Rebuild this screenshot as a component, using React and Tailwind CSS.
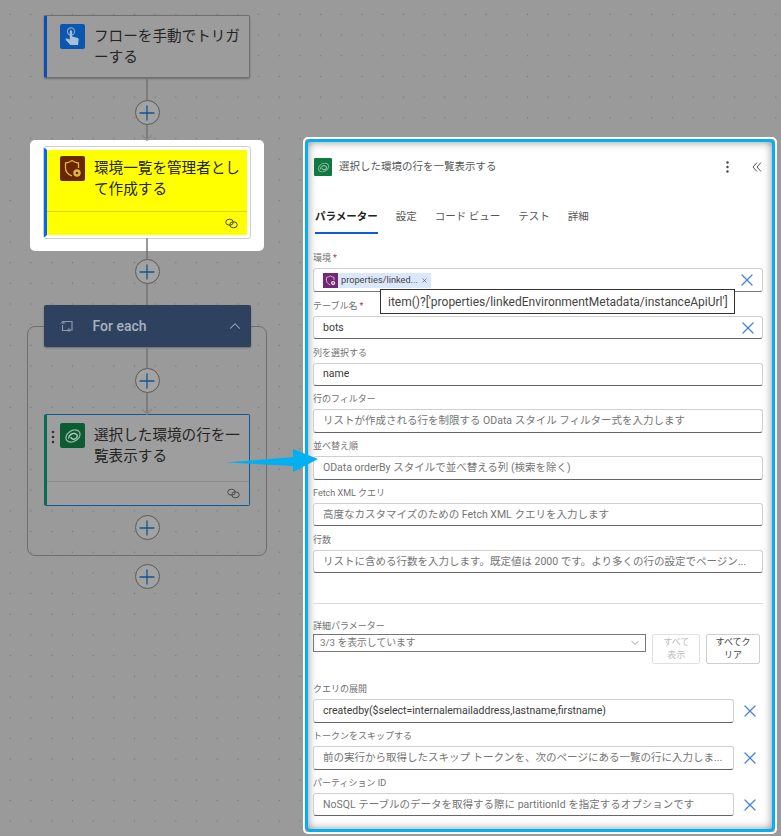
import React from "react";
import { Plus, X, ChevronDown, ChevronUp } from "lucide-react";

const LinkIcon = () => (
  <svg width="13" height="11" viewBox="0 0 13 11" fill="none" stroke="#4a4a4a" strokeWidth="1">
    <ellipse cx="4.5" cy="4.2" rx="3.8" ry="3" />
    <ellipse cx="8.5" cy="6.8" rx="3.8" ry="3" />
  </svg>
);

const HandIcon = () => (
  <svg width="17" height="19" viewBox="0 0 17 19" fill="none">
    <circle cx="7" cy="4.5" r="3.6" stroke="#7fa3cf" strokeWidth="1.2" />
    <path d="M5.8 4.5a1.2 1.2 0 0 1 2.4 0v5l5 1.2c1 .3 1.5 1 1.4 2l-.6 5.3H6.4L2 13.2c-.8-1-.2-2 .9-1.8l2.9 1.2z" fill="#a9bfd8" />
  </svg>
);

const ShieldIcon = ({ color = "#e0b93a", size = 19, dot = "#e0b93a" }) => (
  <svg width={size} height={size} viewBox="0 0 19 19" fill="none">
    <path d="M9 1.5c2 1.5 4 2.3 6.5 2.5v5" stroke={color} strokeWidth="1.3" />
    <path d="M9 1.5C7 3 5 3.8 2.5 4v5c0 3.8 2.4 6.3 6.5 8" stroke={color} strokeWidth="1.3" />
    <circle cx="14" cy="14" r="3.7" fill={dot} />
    <circle cx="14" cy="14" r="1.3" fill="#6b2500" />
  </svg>
);

const DataverseIcon = ({ size = 18 }) => (
  <svg width={size} height={size} viewBox="0 0 18 18" fill="none">
    <ellipse cx="9" cy="9" rx="7.6" ry="5.4" transform="rotate(-30 9 9)" stroke="#8fb39c" strokeWidth="1.3" />
    <path d="M4.5 11.5C5 7.5 9 5.5 12 7c2 1 1.5 4-1 5-2 .7-4-.3-4-2" stroke="#c4d6ca" strokeWidth="1.3" />
  </svg>
);

const LoopIcon = () => (
  <svg width="14" height="12" viewBox="0 0 14 12" fill="none" stroke="#8b97a8" strokeWidth="1.2">
    <path d="M3 4V1.5h9V10H8" />
    <path d="M11 10.5H2.5V5" />
    <path d="M1 3.5L3 1l2 2.5" strokeWidth="1" />
    <path d="M9.5 8l-2 2 2 2" strokeWidth="1" />
  </svg>
);

const Connector = ({ top = 0, bottom = 0, arrow = false }) => (
  <div className="relative flex flex-col items-center w-[26px]">
    <div className="w-[2px] bg-[#7c7c7c]" style={{ height: top }} />
    <div className="flex h-[25px] w-[25px] items-center justify-center rounded-full border-[1.5px] border-[#5a5a5a] bg-[#a2a2a2]">
      <Plus size={24} strokeWidth={1.3} className="shrink-0 text-[#15568f]" />
    </div>
    <div className="w-[2px] bg-[#7c7c7c]" style={{ height: bottom }} />
    {arrow && (
      <svg className="absolute left-[7px] -bottom-[1px] z-10" width="12" height="7" viewBox="0 0 12 7" fill="none" stroke="#8a8a8a" strokeWidth="1.6">
        <path d="M1 1l5 5 5-5" />
      </svg>
    )}
  </div>
);

const Card = ({ tint, title, icon, iconBg, footer, grip, className, padTop = "pt-[8px]" }) => (
  <div className={`flex flex-col w-[206px] shrink-0 rounded-[2px] ${className}`}>
    <div className={`flex items-start gap-[9px] pl-[13px] pr-[6px] ${padTop}`}>
      <div className="relative">
        {grip && (
          <svg className="absolute -left-[9px] top-[7px]" width="4" height="14" viewBox="0 0 4 14" fill="#333">
            <circle cx="2" cy="2" r="1.3" />
            <circle cx="2" cy="7" r="1.3" />
            <circle cx="2" cy="12" r="1.3" />
          </svg>
        )}
        <div className={`flex h-[25px] w-[25px] shrink-0 items-center justify-center rounded-[2px] ${iconBg}`}>{icon}</div>
      </div>
      <p className="mt-[1.5px] text-[14.6px] leading-[21.5px] text-[#242424]">{title}</p>
    </div>
    {footer && (
      <div className={`mt-auto flex h-[24px] items-center justify-end border-t pr-[9px] ${tint}`}>
        <LinkIcon />
      </div>
    )}
  </div>
);

const Label = ({ children, required }) => (
  <div className="flex h-[23.4px] items-end pb-[4px] text-[9px] leading-[11px] text-[#707070]">
    {children}
    {required && <span className="ml-[2px] text-[#c4314b]">*</span>}
  </div>
);

const Box = ({ children, muted, wide }) => (
  <div className={`flex h-[23.4px] min-w-0 items-center rounded-[3px] border border-[#cfcfcf] border-b-[#666] bg-white px-[9px] text-[10.5px] ${wide ? "w-[450px]" : "w-[422px]"} ${muted ? "text-[#757575]" : "text-[#3a3a3a]"}`}>
    <span className="truncate">{children}</span>
  </div>
);

const ClearIcon = () => <X size={20} strokeWidth={1.5} className="shrink-0 text-[#4a7fdc]" />;

const Field = ({ label, required, value, placeholder, clearInside }) => (
  <div className="flex flex-col">
    <Label required={required}>{label}</Label>
    <div className="relative w-[450px]">
      <Box wide muted={!value}>{value || placeholder}</Box>
      {clearInside && <div className="absolute right-[5px] top-[2px]"><ClearIcon /></div>}
    </div>
  </div>
);

const AdvField = ({ label, value, placeholder }) => (
  <div className="flex flex-col">
    <Label>{label}</Label>
    <div className="flex items-center gap-[6px]">
      <Box muted={!value}>{value || placeholder}</Box>
      <ClearIcon />
    </div>
  </div>
);

const tabs = ["設定", "コード ビュー", "テスト", "詳細"];

export default function App() {
  return (
    <div className="relative flex h-[836px] w-[781px] overflow-hidden bg-[#9a9a9a] bg-[radial-gradient(circle,#727272_0.7px,transparent_1px)] bg-[size:20.7px_20.7px] bg-[position:0px_4px] font-['Roboto','Noto_Sans_CJK_JP',sans-serif]">
      {/* canvas */}
      <div className="flex w-[303px] shrink-0 flex-col items-center pt-[15px] pr-[9px]">
        <Card
          title="フローを手動でトリガーする"
          iconBg="bg-[#0b57b0]"
          icon={<HandIcon />}
          className="h-[63px] border border-[#707070] border-l-[3px] border-l-[#0b4fb0] bg-[#9c9c9c] shadow-[0_1px_2px_rgba(0,0,0,0.3)]"
        />
        <Connector top={22} bottom={15} arrow />

        <div className="flex h-[111px] w-[234px] flex-col items-center rounded-[5px] bg-white pt-[7px]">
          <Card
            title="環境一覧を管理者として作成する"
            iconBg="bg-[#6b2500]"
            icon={<ShieldIcon />}
            footer
            padTop="pt-[6px]"
            tint="border-[#d8d800]"
            className="h-[91px] border-[3px] border-l-[3px] border-[#ffffff] border-l-[#0066ff] bg-[#ffff00] outline outline-[#cfcfcf]"
          />
          <div className="h-[13px] w-[2px] bg-[#9a9a9a]" />
        </div>
        <Connector top={8} bottom={21} />

        <div className="relative mt-[21px] flex h-[230px] w-[240px] flex-col items-center rounded-[8px] border border-[#6e6e6e]">
          <div className="-mt-[22px] flex h-[42px] w-[207px] items-center rounded-[2px] bg-[#2e4260] pl-[16px] pr-[7px] text-[#a9b2bf] shadow-[0_1px_2px_rgba(0,0,0,0.3)]">
            <LoopIcon />
            <span className="ml-[19px] flex-1 text-[14px] font-medium">For each</span>
            <ChevronUp size={18} strokeWidth={1.4} />
          </div>
          <Connector top={21} bottom={21} arrow />
          <Card
            grip
            title="選択した環境の行を一覧表示する"
            iconBg="bg-[#0b5c33]"
            icon={<DataverseIcon />}
            footer
            tint="border-[#8a8a8a]"
            className="h-[92px] border border-[#0f5a9c] border-l-[3px] border-l-[#0a6a52] bg-[#9e9e9e]"
          />
          <div className="h-[9px]" />
          <Connector />
        </div>
        <div className="h-[8px]" />
        <Connector />
      </div>

      {/* side panel */}
      <div className="pt-[137px]">
        <div className="flex h-[697px] w-[474px] flex-col rounded-[5px] border-2 border-white">
          <div className="flex h-full flex-col rounded-[6px] border-[3px] border-[#00b0f0] bg-white pl-[5px] pr-[12px] shadow-[inset_0_0_8px_rgba(0,0,0,0.45)]">
            <div className="-mr-[4px] ml-[1px] flex h-[50px] shrink-0 items-center">
              <div className="flex h-[18px] w-[18px] items-center justify-center rounded-[1px] bg-[#0e7a42]">
                <DataverseIcon size={13} />
              </div>
              <span className="ml-[7px] flex-1 text-[10.5px] text-[#555]">選択した環境の行を一覧表示する</span>
              <svg width="3" height="12" viewBox="0 0 3 12" fill="#444">
                <circle cx="1.5" cy="1.5" r="1.2" />
                <circle cx="1.5" cy="6" r="1.2" />
                <circle cx="1.5" cy="10.5" r="1.2" />
              </svg>
              <svg className="ml-[23px]" width="10" height="10" viewBox="0 0 10 10" fill="none" stroke="#555" strokeWidth="1">
                <path d="M5 .5L1 5l4 4.5" />
                <path d="M9 .5L5 5l4 4.5" />
              </svg>
              <div className="w-[2px]" />
            </div>

            <div className="flex h-[42px] shrink-0 items-start gap-[18px] pl-[2px] pt-[18px] text-[10.5px] leading-[14px] text-[#555]">
              <span className="flex h-[24px] flex-col justify-between font-semibold text-[#222]">
                パラメーター
                <span className="h-[2px] w-full bg-[#1159d6]" />
              </span>
              {tabs.map((t) => <span key={t}>{t}</span>)}
            </div>

            <div className="mt-[11px] flex flex-col">
              <div className="flex flex-col">
                <Label required>環境</Label>
                <div className="relative flex h-[24px] w-[450px] items-center rounded-[3px] border border-[#cfcfcf] border-b-[#777] pl-[9px]">
                  <div className="flex h-[15px] w-[108px] items-center bg-[#dbe7fb]">
                    <div className="flex h-[15px] w-[15px] items-center justify-center bg-[#742774]">
                      <ShieldIcon size={11} color="#e6d8e6" dot="#e6d8e6" />
                    </div>
                    <span className="ml-[3px] w-[76px] whitespace-nowrap text-[9.2px] text-[#444]">properties/linked...</span>
                    <X size={7} strokeWidth={2} className="ml-[4px] text-[#444]" />
                  </div>
                  <div className="absolute right-[5px] top-[1px]"><ClearIcon /></div>
                </div>
              </div>
              <Field label="テーブル名" required value="bots" clearInside />
              <Field label="列を選択する" value="name" />
              <Field label="行のフィルター" placeholder="リストが作成される行を制限する OData スタイル フィルター式を入力します" />
              <Field label="並べ替え順" placeholder="OData orderBy スタイルで並べ替える列 (検索を除く)" />
              <Field label="Fetch XML クエリ" placeholder="高度なカスタマイズのための Fetch XML クエリを入力します" />
              <Field label="行数" placeholder="リストに含める行数を入力します。既定値は 2000 です。より多くの行の設定でページン..." />
            </div>

            <div className="mt-[30px] h-px w-[450px] shrink-0 bg-[#dcdcdc]" />

            <div className="mt-[16px] text-[9px] leading-[12px] text-[#707070]">詳細パラメーター</div>
            <div className="mt-[2px] flex items-start gap-[6px]">
              <div className="flex h-[18px] w-[335px] items-center justify-between border border-[#777] pl-[6px] pr-[4px] text-[9.8px] text-[#777]">
                3/3 を表示しています
                <ChevronDown size={12} strokeWidth={1.2} className="text-[#555]" />
              </div>
              <button className="h-[30px] w-[48px] rounded-[2px] border border-[#e0e0e0] px-[6px] text-[9px] leading-[13px] text-[#bdbdbd]">すべて表示</button>
              <button className="h-[30px] w-[54px] rounded-[2px] border border-[#cfcfcf] px-[7px] text-[9px] leading-[13px] text-[#444]">すべてクリア</button>
            </div>

            <div className="mt-[12px] flex flex-col">
              <AdvField label="クエリの展開" value="createdby($select=internalemailaddress,lastname,firstname)" />
              <AdvField label="トークンをスキップする" placeholder="前の実行から取得したスキップ トークンを、次のページにある一覧の行に入力しま..." />
              <AdvField label="パーティション ID" placeholder="NoSQL テーブルのデータを取得する際に partitionId を指定するオプションです" />
            </div>
          </div>
        </div>
      </div>

      {/* tooltip over the fields */}
      <div className="absolute left-[380px] top-[289px] flex h-[25px] w-[355px] items-center border border-[#333] bg-white pl-[7px] text-[12px] text-[#444]">
        item()?['properties/linkedEnvironmentMetadata/instanceApiUrl']
      </div>

      {/* callout arrow */}
      <svg className="absolute left-[226px] top-[449px]" width="93" height="24" viewBox="0 0 93 24">
        <path d="M0 13.5L67 8 67 0 92 10 67 23 67 17z" fill="#00b0f0" />
      </svg>
    </div>
  );
}
